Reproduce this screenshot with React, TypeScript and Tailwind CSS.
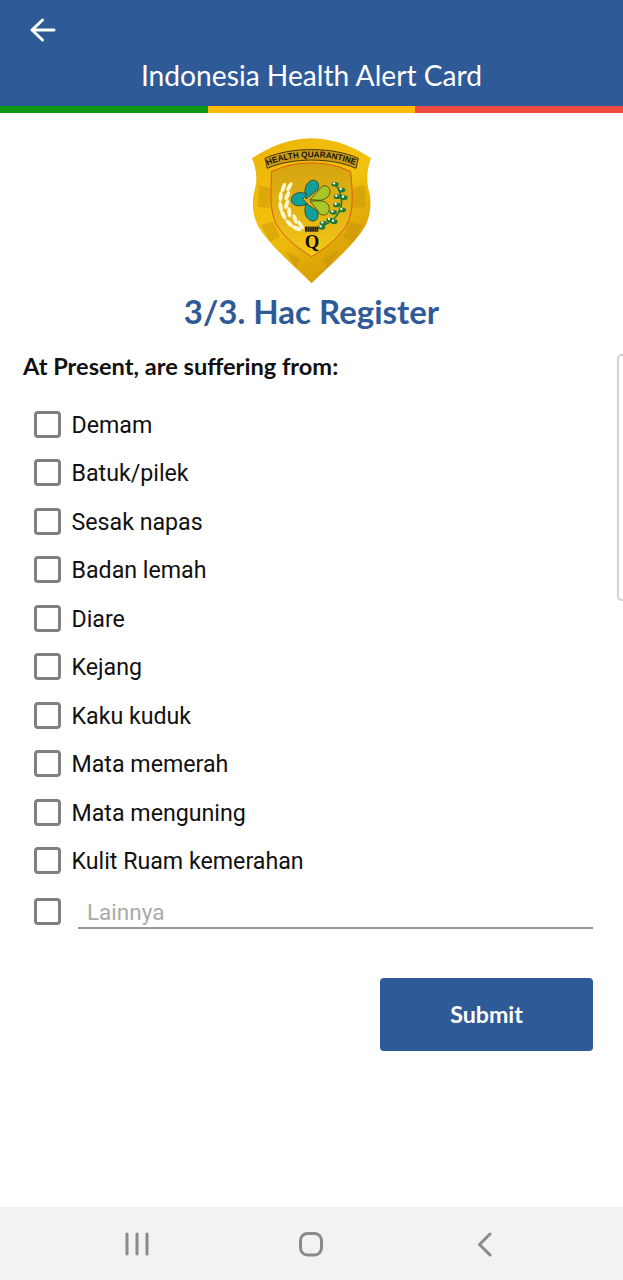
import React from "react";

const items = ["Demam","Batuk/pilek","Sesak napas","Badan lemah","Diare","Kejang","Kaku kuduk","Mata memerah","Mata menguning","Kulit Ruam kemerahan"];

const wheat: [number, number, number][] = [
  [160,188,20],[152,215,5],[152,245,-10],[160,270,-25],[178,295,-45],[200,310,-65],
  [178,185,30],[172,212,25],[170,238,15],[178,262,-5],[195,282,-20],[212,300,-30],
];
const leaves: [number, number][] = [
  [315,178],[335,195],[322,215],[342,218],[320,240],[337,255],[310,262],[300,285],[280,295],[312,290],[275,307],
];

function Logo() {
  return (
    <svg width="165" height="147" viewBox="0 39 495 441" className="block">
      <defs>
        <linearGradient id="g" x1="0" y1="0" x2="0.6" y2="1">
          <stop offset="0" stopColor="#ecb30a" />
          <stop offset="0.55" stopColor="#f3c20d" />
          <stop offset="1" stopColor="#d49b06" />
        </linearGradient>
        <linearGradient id="h" x1="0" y1="0" x2="0" y2="1">
          <stop offset="0" stopColor="#d4a410" />
          <stop offset="0.6" stopColor="#e6b715" />
          <stop offset="1" stopColor="#f4ca18" />
        </linearGradient>
      </defs>
      <path d="M245 40 C320 42 375 68 423 100 C412 130 408 160 416 195 C428 235 420 290 395 320 C360 370 300 420 245 475 C190 420 130 370 95 320 C70 290 62 235 74 195 C84 160 78 130 66 100 C115 68 170 42 245 40 Z" fill="url(#g)" />
      <g fill="#c08f08" opacity="0.4">
        <path d="M86 180 L120 190 L122 250 L84 245 Z" />
        <path d="M404 180 L368 190 L366 250 L406 245 Z" />
        <path d="M92 300 L130 290 L150 335 L120 350 Z" />
        <path d="M398 300 L358 290 L340 335 L370 350 Z" />
        <path d="M165 378 L212 402 L198 430 Z" />
        <path d="M325 378 L278 402 L292 430 Z" />
      </g>
      <path d="M125 140 C195 105 295 105 362 140 C368 200 372 260 350 300 C320 345 285 370 245 395 C205 370 170 345 140 300 C118 260 122 200 125 140 Z" fill="url(#h)" stroke="#d9480f" strokeWidth="2.5" />
      <path d="M105 100 C180 65 310 65 385 100 L378 130 C305 97 185 97 112 130 Z" fill="#c89a17" stroke="#2a2208" strokeWidth="2.5" />
      <path id="arc" d="M113 122 C185 88 305 88 378 122" fill="none" />
      <text fontFamily="'Liberation Sans', sans-serif" fontWeight="700" fontSize="25" fill="#141208">
        <textPath href="#arc" textLength="268" lengthAdjust="spacingAndGlyphs">HEALTH QUARANTINE</textPath>
      </text>
      <g fill="#fbf6d4">
        {wheat.map(([x, y, r]) => (
          <ellipse key={`${x}-${y}`} cx={x} cy={y} rx="6" ry="15" transform={`rotate(${r} ${x} ${y})`} />
        ))}
      </g>
      <path d="M272 303 C300 295 325 275 333 245 C338 220 330 195 316 178" fill="none" stroke="#1f7a36" strokeWidth="5" />
      {leaves.map(([x, y]) => (
        <g key={`${x}-${y}`}>
          <ellipse cx={x} cy={y} rx="11" ry="7" fill="#1f7a36" />
          <circle cx={x - 3} cy={y - 3} r="3.5" fill="#ffffff" />
        </g>
      ))}
      <g stroke="#1d2a1e" strokeWidth="2">
        <path d="M228 222 C222 205 222 175 245 166 C262 162 272 180 262 195 Z" fill="#12a09c" />
        <path d="M232 207 C215 200 190 200 184 222 C182 240 205 250 232 236 L218 222 Z" fill="#12a09c" />
        <path d="M228 235 C222 255 222 280 245 288 C262 290 268 275 262 258 Z" fill="#12a09c" />
        <path d="M240 224 L268 194 C278 175 298 180 300 200 C300 215 285 224 270 226 Z" fill="#a9c628" />
        <path d="M240 228 L270 228 C290 226 305 245 295 262 C285 278 265 268 262 256 Z" fill="#a9c628" />
      </g>
      <rect x="225" y="305" width="40" height="15" fill="#1a1a1a" />
      <path d="M232 305 V320 M239 305 V320 M246 305 V320 M253 305 V320 M260 305 V320" stroke="#c9a020" strokeWidth="1.5" />
      <text x="246" y="368" textAnchor="middle" fontFamily="'Liberation Serif', serif" fontWeight="700" fontSize="56" fill="#0d0d0d">Q</text>
    </svg>
  );
}

function Box() {
  return <span className="block w-[27px] h-[27px] shrink-0 rounded-[4px] border-[3px] border-[#808080] bg-white" />;
}

export default function App() {
  return (
    <div className="relative flex flex-col w-[623px] h-[1280px] bg-white overflow-hidden font-['Lato',sans-serif]">
      <header className="h-[106px] shrink-0 bg-[#2f5a98] text-white flex flex-col">
        <div className="pl-[29px] pt-[15px] h-[46px]">
          <svg width="28" height="30" viewBox="0 0 28 30" fill="none" stroke="white" strokeWidth="3" strokeLinecap="round" strokeLinejoin="round">
            <path d="M3.5 15 H25" />
            <path d="M13.5 5 L3 15 L13.5 25" />
          </svg>
        </div>
        <h1 className="text-center text-[28.2px] leading-[36px] font-normal mt-[11px]">Indonesia Health Alert Card</h1>
      </header>
      <div className="flex h-[7px] shrink-0">
        <div className="flex-1 bg-[#0a9a14]" />
        <div className="flex-1 bg-[#fdbb0c]" />
        <div className="flex-1 bg-[#ee4b43]" />
      </div>
      <main className="flex-1 flex flex-col">
        <div className="flex justify-center mt-[25px] pl-[2px]"><Logo /></div>
        <h2 className="mt-[4px] text-center text-[33px] leading-[44px] font-bold text-[#2f5a98]">3/3. Hac Register</h2>
        <p className="mt-[18px] pl-[23px] text-[23.6px] leading-[30px] font-bold text-[#111]">At Present, are suffering from:</p>
        <ul className="mt-[20px] pl-[34px] flex flex-col font-['Roboto',sans-serif]">
          {items.map((t) => (
            <li key={t} className="h-[48.5px] flex items-center gap-[10.5px] text-[23.2px] text-[#111]">
              <span className="-translate-y-px"><Box /></span>
              <span>{t}</span>
            </li>
          ))}
        </ul>
        <div className="mt-[4px] pl-[34px] pr-[30px] flex items-start gap-[17px] font-['Roboto',sans-serif]">
          <span className="mt-[8px]"><Box /></span>
          <div className="flex-1 h-[39px] border-b-2 border-[#999999] pl-[9px] pt-[7px] text-[22.5px] leading-[30px] text-[#aaaaaa]">Lainnya</div>
        </div>
        <div className="mt-[49px] pr-[30px] flex justify-end">
          <button className="w-[213px] h-[73px] rounded-[4px] bg-[#2f5a98] text-white text-[23.2px] font-bold">Submit</button>
        </div>
      </main>
      <nav className="h-[73px] shrink-0 bg-[#f2f2f2] flex items-center justify-center gap-[148px] pr-[2px]">
        <svg width="26" height="26" viewBox="0 0 26 26" stroke="#8a8a8a" strokeWidth="3" strokeLinecap="round"><path d="M3 3 V23 M13 3 V23 M23 3 V23" /></svg>
        <svg width="26" height="26" viewBox="0 0 26 26" fill="none" stroke="#8a8a8a" strokeWidth="3"><rect x="2.5" y="2.5" width="21" height="21.5" rx="7" /></svg>
        <svg width="26" height="26" viewBox="0 0 26 26" fill="none" stroke="#8a8a8a" strokeWidth="3" strokeLinecap="round" strokeLinejoin="round"><path d="M18 3 L7.5 13.5 L18 24" /></svg>
      </nav>
      <div className="absolute left-[617px] top-[354px] w-[10px] h-[247px] rounded-[8px] border-2 border-[#d4d4d4] bg-white" />
    </div>
  );
}
